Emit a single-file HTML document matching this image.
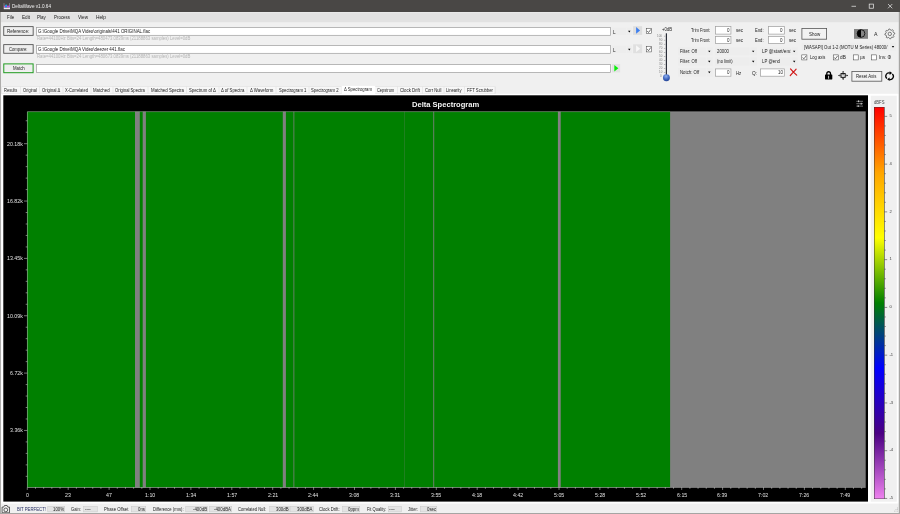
<!DOCTYPE html>
<html lang="en"><head><meta charset="utf-8"><title>DeltaWave v1.0.64</title><style>
html,body{margin:0;padding:0}
body{width:900px;height:514px;overflow:hidden;background:#f0f0f0;position:relative;font-family:"Liberation Sans",sans-serif}
.b{position:absolute;display:block;box-sizing:border-box}
.tx{position:absolute;left:0;top:0;width:900px;height:514px;filter:blur(0.36px)}
.g{position:static}
.t{position:absolute;display:block;white-space:nowrap;transform-origin:0 50%;font-family:"Liberation Sans",sans-serif}
</style></head>
<body>
<svg class="b" style="left:0;top:0" width="900" height="514" viewBox="0 0 900 514">
<g id="shape-titlebar">
<rect x="0.00" y="0.00" width="900.00" height="12.10" fill="#494745"/>
<g transform="translate(3.50 3.00)"><rect x="0.1" y="0.1" width="0.8" height="6" fill="#8d8b89"/><rect x="5.7" y="0.1" width="0.8" height="6" fill="#8d8b89"/><rect x="0.4" y="4.5" width="6.1" height="1.7" fill="#e9e9ee"/><rect x="0.4" y="2.7" width="6.1" height="1.5" fill="#e040c0"/><rect x="1.4" y="2.6" width="2.2" height="1.7" fill="#2a86f4"/><rect x="5.2" y="2.7" width="1.2" height="1.5" fill="#6a6af0"/><ellipse cx="2.6" cy="2.2" rx="1" ry="0.7" fill="#22a8e0"/></g>
<g transform="translate(848.00 2.00)"><path d="M3.5 4.3H8" stroke="#f0f0f0" stroke-width="0.7" fill="none"/><rect x="21.2" y="2.1" width="4.4" height="4.1" stroke="#f0f0f0" stroke-width="0.7" fill="none"/><path d="M40 2L44.3 6.3M44.3 2L40 6.3" stroke="#f0f0f0" stroke-width="0.7" fill="none"/></g>
</g>
<g id="shape-menubar">
<rect x="0.90" y="12.00" width="897.90" height="10.20" fill="#e2e2e2"/>
<rect x="0.90" y="12.00" width="897.90" height="1.20" fill="#e9e9e9"/>
</g>
<g id="shape-files">
<rect x="3.30" y="26.20" width="30.30" height="9.60" fill="#eeeeee"/>
<rect x="4.20" y="27.10" width="28.50" height="7.80" fill="none"/>
<rect x="4.45" y="27.35" width="28.00" height="7.30" fill="none" stroke="#f8f8f8" stroke-width="0.5"/>
<rect x="3.30" y="26.20" width="30.30" height="9.60" fill="none"/>
<rect x="3.75" y="26.65" width="29.40" height="8.70" fill="none" stroke="#505050" stroke-width="0.9"/>
<rect x="3.30" y="44.20" width="30.30" height="9.50" fill="#eeeeee"/>
<rect x="4.20" y="45.10" width="28.50" height="7.70" fill="none"/>
<rect x="4.45" y="45.35" width="28.00" height="7.20" fill="none" stroke="#f8f8f8" stroke-width="0.5"/>
<rect x="3.30" y="44.20" width="30.30" height="9.50" fill="none"/>
<rect x="3.75" y="44.65" width="29.40" height="8.60" fill="none" stroke="#505050" stroke-width="0.9"/>
<rect x="3.30" y="63.40" width="30.30" height="9.80" fill="#eeeeee"/>
<rect x="4.30" y="64.40" width="28.30" height="7.80" fill="none"/>
<rect x="4.55" y="64.65" width="27.80" height="7.30" fill="none" stroke="#f8f8f8" stroke-width="0.5"/>
<rect x="3.30" y="63.40" width="30.30" height="9.80" fill="none"/>
<rect x="3.80" y="63.90" width="29.30" height="8.80" fill="none" stroke="#1f9a1f" stroke-width="1.0"/>
<rect x="36.10" y="27.00" width="574.70" height="8.70" fill="#fff"/>
<rect x="36.48" y="27.38" width="573.95" height="7.95" fill="none" stroke="#a0a0a0" stroke-width="0.75"/>
<rect x="36.10" y="45.00" width="574.70" height="8.70" fill="#fff"/>
<rect x="36.48" y="45.38" width="573.95" height="7.95" fill="none" stroke="#a0a0a0" stroke-width="0.75"/>
<rect x="36.10" y="64.00" width="574.70" height="8.80" fill="#fff"/>
<rect x="36.48" y="64.38" width="573.95" height="8.05" fill="none" stroke="#a0a0a0" stroke-width="0.75"/>
<rect x="612.00" y="27.60" width="20.00" height="7.60" fill="#ededed"/>
<rect x="625.90" y="27.60" width="0.40" height="7.60" fill="#f5f5f5"/>
<g transform="translate(628.00 30.60)"><path d="M0.1 0.1H2.5L1.3 1.8Z" fill="#000"/></g>
<rect x="612.00" y="45.60" width="20.00" height="7.60" fill="#ededed"/>
<rect x="625.90" y="45.60" width="0.40" height="7.60" fill="#f5f5f5"/>
<g transform="translate(628.00 48.60)"><path d="M0.1 0.1H2.5L1.3 1.8Z" fill="#000"/></g>
<rect x="633.10" y="26.20" width="9.00" height="8.70" fill="#dedede"/>
<path d="M636.1 27.0L640.1 30.4L636.1 33.8Z" fill="#3d7ff0"/>
<rect x="633.10" y="44.30" width="9.00" height="8.90" fill="#e0e0e0"/>
<path d="M636.1 45.3L640.1 48.7L636.1 52.1Z" fill="#f8f8f8"/>
<rect x="612.00" y="64.00" width="8.10" height="8.40" fill="#e2e2e2"/>
<path d="M614.3 64.9L618.4 68.2L614.3 71.4Z" fill="#0aee0a"/>
<rect x="646.00" y="28.00" width="6.00" height="6.00" fill="#fff"/>
<rect x="646.27" y="28.27" width="5.45" height="5.45" fill="none" stroke="#444" stroke-width="0.55"/>
<g transform="translate(646.00 28.00)"><path d="M1.20 3.00L2.52 4.50L4.92 1.32" stroke="#333" stroke-width="0.7" fill="none"/></g>
<rect x="646.00" y="46.00" width="6.00" height="6.20" fill="#fff"/>
<rect x="646.27" y="46.27" width="5.45" height="5.65" fill="none" stroke="#444" stroke-width="0.55"/>
<g transform="translate(646.00 46.00)"><path d="M1.20 3.10L2.52 4.65L4.92 1.36" stroke="#333" stroke-width="0.7" fill="none"/></g>
</g>
<g id="shape-volume">
<rect x="665.80" y="33.30" width="1.20" height="42.70" fill="#2a2d38"/>
<rect x="663.90" y="35.85" width="1.50" height="0.50" fill="#858585"/>
<rect x="663.90" y="39.89" width="1.50" height="0.50" fill="#858585"/>
<rect x="663.90" y="43.93" width="1.50" height="0.50" fill="#858585"/>
<rect x="663.90" y="47.97" width="1.50" height="0.50" fill="#858585"/>
<rect x="663.90" y="52.01" width="1.50" height="0.50" fill="#858585"/>
<rect x="663.90" y="56.05" width="1.50" height="0.50" fill="#858585"/>
<rect x="663.90" y="60.09" width="1.50" height="0.50" fill="#858585"/>
<rect x="663.90" y="64.13" width="1.50" height="0.50" fill="#858585"/>
<rect x="663.90" y="68.17" width="1.50" height="0.50" fill="#858585"/>
<rect x="663.90" y="72.21" width="1.50" height="0.50" fill="#858585"/>
<rect x="663.90" y="76.25" width="1.50" height="0.50" fill="#858585"/>
<g transform="translate(662.40 73.70)"><defs><radialGradient id="kg" cx="0.45" cy="0.3" r="0.8"><stop offset="0" stop-color="#8fb0ee"/><stop offset="0.55" stop-color="#3f66c0"/><stop offset="1" stop-color="#1d3a86"/></radialGradient></defs><circle cx="4" cy="4" r="3.45" fill="url(#kg)"/></g>
</g>
<g id="shape-filters">
<rect x="715.00" y="26.00" width="16.30" height="8.50" fill="#fff"/>
<rect x="715.38" y="26.38" width="15.55" height="7.75" fill="none" stroke="#a0a0a0" stroke-width="0.75"/>
<rect x="715.00" y="36.00" width="16.30" height="7.80" fill="#fff"/>
<rect x="715.38" y="36.38" width="15.55" height="7.05" fill="none" stroke="#a0a0a0" stroke-width="0.75"/>
<rect x="768.00" y="26.00" width="16.70" height="8.50" fill="#fff"/>
<rect x="768.38" y="26.38" width="15.95" height="7.75" fill="none" stroke="#a0a0a0" stroke-width="0.75"/>
<rect x="768.00" y="36.00" width="16.70" height="7.80" fill="#fff"/>
<rect x="768.38" y="36.38" width="15.95" height="7.05" fill="none" stroke="#a0a0a0" stroke-width="0.75"/>
<rect x="678.00" y="47.30" width="34.70" height="8.10" fill="#ededed"/>
<rect x="705.90" y="47.30" width="0.40" height="8.10" fill="#f5f5f5"/>
<g transform="translate(708.00 50.55)"><path d="M0.1 0.1H2.5L1.3 1.8Z" fill="#000"/></g>
<rect x="678.00" y="57.40" width="34.70" height="8.20" fill="#ededed"/>
<rect x="705.90" y="57.40" width="0.40" height="8.20" fill="#f5f5f5"/>
<g transform="translate(708.00 60.70)"><path d="M0.1 0.1H2.5L1.3 1.8Z" fill="#000"/></g>
<rect x="678.00" y="68.00" width="34.70" height="8.60" fill="#ededed"/>
<rect x="705.90" y="68.00" width="0.40" height="8.60" fill="#f5f5f5"/>
<g transform="translate(708.00 71.50)"><path d="M0.1 0.1H2.5L1.3 1.8Z" fill="#000"/></g>
<rect x="715.00" y="47.30" width="42.00" height="8.10" fill="#ededed"/>
<rect x="749.80" y="47.30" width="0.40" height="8.10" fill="#f5f5f5"/>
<g transform="translate(751.90 50.55)"><path d="M0.1 0.1H2.5L1.3 1.8Z" fill="#000"/></g>
<rect x="715.00" y="57.40" width="42.00" height="8.20" fill="#ededed"/>
<rect x="749.80" y="57.40" width="0.40" height="8.20" fill="#f5f5f5"/>
<g transform="translate(751.90 60.70)"><path d="M0.1 0.1H2.5L1.3 1.8Z" fill="#000"/></g>
<rect x="760.00" y="47.30" width="37.60" height="8.10" fill="#ededed"/>
<rect x="790.80" y="47.30" width="0.40" height="8.10" fill="#f5f5f5"/>
<g transform="translate(792.90 50.55)"><path d="M0.1 0.1H2.5L1.3 1.8Z" fill="#000"/></g>
<rect x="760.00" y="57.40" width="37.60" height="8.20" fill="#ededed"/>
<rect x="790.80" y="57.40" width="0.40" height="8.20" fill="#f5f5f5"/>
<g transform="translate(792.90 60.70)"><path d="M0.1 0.1H2.5L1.3 1.8Z" fill="#000"/></g>
<rect x="715.00" y="68.50" width="16.30" height="8.10" fill="#fff"/>
<rect x="715.38" y="68.88" width="15.55" height="7.35" fill="none" stroke="#a0a0a0" stroke-width="0.75"/>
<rect x="760.00" y="68.50" width="24.70" height="8.10" fill="#fff"/>
<rect x="760.38" y="68.88" width="23.95" height="7.35" fill="none" stroke="#a0a0a0" stroke-width="0.75"/>
<g transform="translate(789.50 68.30)"><path d="M1 0.6C2.5 2.4 5 5 7.2 6.8M6.6 0.8C5 2.6 2.6 5.2 0.8 7.2" stroke="#d01818" stroke-width="1.2" fill="none" stroke-linecap="round"/></g>
</g>
<g id="shape-options">
<rect x="801.50" y="28.00" width="25.50" height="11.60" fill="#f2f2f2"/>
<rect x="801.90" y="28.40" width="24.70" height="10.80" fill="none" stroke="#555" stroke-width="0.8"/>
<rect x="854.00" y="29.00" width="14.00" height="9.80" fill="#808080"/>
<g transform="translate(856.00 28.50)"><circle cx="5" cy="5" r="3.85" fill="#858585" stroke="#000" stroke-width="0.75"/><path d="M5 1.15A3.85 3.85 0 0 0 5 8.85Z" fill="#000"/></g>
<g transform="translate(883.80 27.90)"><path d="M10.85 5.03L10.95 6.00L9.78 6.75L9.56 7.47L10.12 8.75L9.50 9.50L8.14 9.20L7.47 9.56L6.97 10.85L6.00 10.95L5.25 9.78L4.53 9.56L3.25 10.12L2.50 9.50L2.80 8.14L2.44 7.47L1.15 6.97L1.05 6.00L2.22 5.25L2.44 4.53L1.88 3.25L2.50 2.50L3.86 2.80L4.53 2.44L5.03 1.15L6.00 1.05L6.75 2.22L7.47 2.44L8.75 1.88L9.50 2.50L9.20 3.86L9.56 4.53Z" fill="none" stroke="#4a4a4a" stroke-width="0.7" stroke-linejoin="round"/><circle cx="6" cy="6" r="1.7" fill="none" stroke="#4a4a4a" stroke-width="0.7"/></g>
<rect x="801.50" y="42.70" width="94.50" height="7.90" fill="#ededed"/>
<rect x="889.60" y="42.70" width="0.40" height="7.90" fill="#f5f5f5"/>
<g transform="translate(891.70 45.85)"><path d="M0.1 0.1H2.5L1.3 1.8Z" fill="#000"/></g>
<rect x="801.50" y="54.60" width="5.70" height="5.60" fill="#fff"/>
<rect x="801.77" y="54.88" width="5.15" height="5.05" fill="none" stroke="#444" stroke-width="0.55"/>
<g transform="translate(801.50 54.60)"><path d="M1.14 2.80L2.39 4.20L4.67 1.23" stroke="#333" stroke-width="0.7" fill="none"/></g>
<rect x="833.00" y="54.60" width="5.70" height="5.60" fill="#fff"/>
<rect x="833.27" y="54.88" width="5.15" height="5.05" fill="none" stroke="#444" stroke-width="0.55"/>
<g transform="translate(833.00 54.60)"><path d="M1.14 2.80L2.39 4.20L4.67 1.23" stroke="#333" stroke-width="0.7" fill="none"/></g>
<rect x="853.00" y="54.60" width="5.50" height="5.60" fill="#fff"/>
<rect x="853.27" y="54.88" width="4.95" height="5.05" fill="none" stroke="#444" stroke-width="0.55"/>
<rect x="871.20" y="54.60" width="5.60" height="5.60" fill="#fff"/>
<rect x="871.48" y="54.88" width="5.05" height="5.05" fill="none" stroke="#444" stroke-width="0.55"/>
<g transform="translate(824.50 70.50)"><path d="M2.3 4.4V3.1A1.85 1.85 0 0 1 6 3.1V4.4" fill="none" stroke="#000" stroke-width="1.3"/><rect x="0.5" y="4" width="7.3" height="5" rx="0.4" fill="#000"/><rect x="3.75" y="5.3" width="0.8" height="2.9" fill="#f0f0f0"/></g>
<g transform="translate(837.60 70.20)"><rect x="3.4" y="3.4" width="4.2" height="3.7" fill="#f4f4f4" stroke="#000" stroke-width="0.95"/><path d="M5.5 0.7L6.6 2.1H4.4ZM5.5 9.8L6.6 8.4H4.4ZM0.5 5.25L1.9 4.2V6.3ZM10.5 5.25L9.1 4.2V6.3Z" fill="#000"/><path d="M5.5 2V3.2M5.5 7.3V8.5M1.8 5.25H3M8 5.25H9.2M4.7 4.6H6.3" stroke="#000" stroke-width="0.6"/></g>
<rect x="851.50" y="71.00" width="30.70" height="10.60" fill="#f2f2f2"/>
<rect x="851.90" y="71.40" width="29.90" height="9.80" fill="none" stroke="#555" stroke-width="0.8"/>
<g transform="translate(884.60 71.20)"><path d="M2.3 7.2A3.1 3.1 0 0 1 5.3 1.9" fill="none" stroke="#000" stroke-width="1.25"/><path d="M5 0.1L7.5 1.9L5 3.7Z" fill="#000"/><path d="M7.7 2.8A3.1 3.1 0 0 1 4.7 8.1" fill="none" stroke="#000" stroke-width="1.25"/><path d="M5 9.9L2.5 8.1L5 6.3Z" fill="#000"/></g>
</g>
<g id="shape-tabs">
<rect x="1.50" y="86.50" width="493.70" height="7.50" fill="#f7f7f7"/>
<rect x="1.75" y="86.75" width="493.20" height="7.00" fill="none" stroke="#dcdcdc" stroke-width="0.5"/>
<rect x="1.20" y="93.80" width="897.40" height="409.70" fill="#fff"/>
<rect x="20.25" y="86.50" width="0.50" height="7.20" fill="#dcdcdc"/>
<rect x="39.35" y="86.50" width="0.50" height="7.20" fill="#dcdcdc"/>
<rect x="62.75" y="86.50" width="0.50" height="7.20" fill="#dcdcdc"/>
<rect x="90.75" y="86.50" width="0.50" height="7.20" fill="#dcdcdc"/>
<rect x="112.75" y="86.50" width="0.50" height="7.20" fill="#dcdcdc"/>
<rect x="147.75" y="86.50" width="0.50" height="7.20" fill="#dcdcdc"/>
<rect x="186.35" y="86.50" width="0.50" height="7.20" fill="#dcdcdc"/>
<rect x="218.75" y="86.50" width="0.50" height="7.20" fill="#dcdcdc"/>
<rect x="246.75" y="86.50" width="0.50" height="7.20" fill="#dcdcdc"/>
<rect x="275.75" y="86.50" width="0.50" height="7.20" fill="#dcdcdc"/>
<rect x="308.75" y="86.50" width="0.50" height="7.20" fill="#dcdcdc"/>
<rect x="341.35" y="86.50" width="0.50" height="7.20" fill="#dcdcdc"/>
<rect x="341.60" y="85.50" width="33.60" height="9.00" fill="#fff"/>
<rect x="341.60" y="85.50" width="33.60" height="0.40" fill="#e6e6e6"/>
<rect x="397.35" y="86.50" width="0.50" height="7.20" fill="#dcdcdc"/>
<rect x="422.35" y="86.50" width="0.50" height="7.20" fill="#dcdcdc"/>
<rect x="443.75" y="86.50" width="0.50" height="7.20" fill="#dcdcdc"/>
<rect x="464.15" y="86.50" width="0.50" height="7.20" fill="#dcdcdc"/>
<rect x="494.95" y="86.50" width="0.50" height="7.20" fill="#dcdcdc"/>
</g>
<g id="shape-plot">
<rect x="3.30" y="95.30" width="864.70" height="406.30" fill="#000"/>
<rect x="27.30" y="111.70" width="838.40" height="375.60" fill="#808080"/>
<rect x="27.30" y="111.70" width="642.80" height="375.60" fill="#008000"/>
<rect x="135.00" y="111.70" width="4.80" height="375.60" fill="#808080"/>
<rect x="142.70" y="111.70" width="3.20" height="375.60" fill="#808080"/>
<rect x="282.80" y="111.70" width="3.10" height="375.60" fill="#808080"/>
<rect x="293.10" y="111.70" width="1.40" height="375.60" fill="rgba(128,128,128,0.55)"/>
<rect x="404.20" y="111.70" width="0.70" height="375.60" fill="rgba(128,128,128,0.35)"/>
<rect x="433.20" y="111.70" width="1.00" height="375.60" fill="rgba(128,128,128,0.85)"/>
<rect x="557.90" y="111.70" width="2.80" height="375.60" fill="#838082"/>
<rect x="27.30" y="111.40" width="838.40" height="0.70" fill="rgba(200,200,200,0.45)"/>
<rect x="27.30" y="487.00" width="838.40" height="0.70" fill="rgba(220,220,220,0.6)"/>
<rect x="26.95" y="111.70" width="0.70" height="375.60" fill="rgba(200,220,200,0.6)"/>
<g transform="translate(856.00 100.00)"><path d="M0.3 1.3H7M0.3 3.7H7M0.3 6.1H7" stroke="#e0e0e0" stroke-width="0.5"/><path d="M2.6 0.4V2.2M5.2 2.8V4.6M2.2 5.2V7" stroke="#e8e8e8" stroke-width="0.9"/></g>
<path d="M27.30 487.30v2.6" stroke="#d8d8d8" stroke-width="0.55"/><path d="M35.48 487.30v1.5" stroke="#d8d8d8" stroke-width="0.55"/><path d="M43.66 487.30v1.5" stroke="#d8d8d8" stroke-width="0.55"/><path d="M51.84 487.30v1.5" stroke="#d8d8d8" stroke-width="0.55"/><path d="M60.02 487.30v1.5" stroke="#d8d8d8" stroke-width="0.55"/><path d="M68.20 487.30v2.6" stroke="#d8d8d8" stroke-width="0.55"/><path d="M76.38 487.30v1.5" stroke="#d8d8d8" stroke-width="0.55"/><path d="M84.56 487.30v1.5" stroke="#d8d8d8" stroke-width="0.55"/><path d="M92.74 487.30v1.5" stroke="#d8d8d8" stroke-width="0.55"/><path d="M100.92 487.30v1.5" stroke="#d8d8d8" stroke-width="0.55"/><path d="M109.10 487.30v2.6" stroke="#d8d8d8" stroke-width="0.55"/><path d="M117.28 487.30v1.5" stroke="#d8d8d8" stroke-width="0.55"/><path d="M125.46 487.30v1.5" stroke="#d8d8d8" stroke-width="0.55"/><path d="M133.64 487.30v1.5" stroke="#d8d8d8" stroke-width="0.55"/><path d="M141.82 487.30v1.5" stroke="#d8d8d8" stroke-width="0.55"/><path d="M150.00 487.30v2.6" stroke="#d8d8d8" stroke-width="0.55"/><path d="M158.18 487.30v1.5" stroke="#d8d8d8" stroke-width="0.55"/><path d="M166.36 487.30v1.5" stroke="#d8d8d8" stroke-width="0.55"/><path d="M174.54 487.30v1.5" stroke="#d8d8d8" stroke-width="0.55"/><path d="M182.72 487.30v1.5" stroke="#d8d8d8" stroke-width="0.55"/><path d="M190.90 487.30v2.6" stroke="#d8d8d8" stroke-width="0.55"/><path d="M199.08 487.30v1.5" stroke="#d8d8d8" stroke-width="0.55"/><path d="M207.26 487.30v1.5" stroke="#d8d8d8" stroke-width="0.55"/><path d="M215.44 487.30v1.5" stroke="#d8d8d8" stroke-width="0.55"/><path d="M223.62 487.30v1.5" stroke="#d8d8d8" stroke-width="0.55"/><path d="M231.80 487.30v2.6" stroke="#d8d8d8" stroke-width="0.55"/><path d="M239.98 487.30v1.5" stroke="#d8d8d8" stroke-width="0.55"/><path d="M248.16 487.30v1.5" stroke="#d8d8d8" stroke-width="0.55"/><path d="M256.34 487.30v1.5" stroke="#d8d8d8" stroke-width="0.55"/><path d="M264.52 487.30v1.5" stroke="#d8d8d8" stroke-width="0.55"/><path d="M272.70 487.30v2.6" stroke="#d8d8d8" stroke-width="0.55"/><path d="M280.88 487.30v1.5" stroke="#d8d8d8" stroke-width="0.55"/><path d="M289.06 487.30v1.5" stroke="#d8d8d8" stroke-width="0.55"/><path d="M297.24 487.30v1.5" stroke="#d8d8d8" stroke-width="0.55"/><path d="M305.42 487.30v1.5" stroke="#d8d8d8" stroke-width="0.55"/><path d="M313.60 487.30v2.6" stroke="#d8d8d8" stroke-width="0.55"/><path d="M321.78 487.30v1.5" stroke="#d8d8d8" stroke-width="0.55"/><path d="M329.96 487.30v1.5" stroke="#d8d8d8" stroke-width="0.55"/><path d="M338.14 487.30v1.5" stroke="#d8d8d8" stroke-width="0.55"/><path d="M346.32 487.30v1.5" stroke="#d8d8d8" stroke-width="0.55"/><path d="M354.50 487.30v2.6" stroke="#d8d8d8" stroke-width="0.55"/><path d="M362.68 487.30v1.5" stroke="#d8d8d8" stroke-width="0.55"/><path d="M370.86 487.30v1.5" stroke="#d8d8d8" stroke-width="0.55"/><path d="M379.04 487.30v1.5" stroke="#d8d8d8" stroke-width="0.55"/><path d="M387.22 487.30v1.5" stroke="#d8d8d8" stroke-width="0.55"/><path d="M395.40 487.30v2.6" stroke="#d8d8d8" stroke-width="0.55"/><path d="M403.58 487.30v1.5" stroke="#d8d8d8" stroke-width="0.55"/><path d="M411.76 487.30v1.5" stroke="#d8d8d8" stroke-width="0.55"/><path d="M419.94 487.30v1.5" stroke="#d8d8d8" stroke-width="0.55"/><path d="M428.12 487.30v1.5" stroke="#d8d8d8" stroke-width="0.55"/><path d="M436.30 487.30v2.6" stroke="#d8d8d8" stroke-width="0.55"/><path d="M444.48 487.30v1.5" stroke="#d8d8d8" stroke-width="0.55"/><path d="M452.66 487.30v1.5" stroke="#d8d8d8" stroke-width="0.55"/><path d="M460.84 487.30v1.5" stroke="#d8d8d8" stroke-width="0.55"/><path d="M469.02 487.30v1.5" stroke="#d8d8d8" stroke-width="0.55"/><path d="M477.20 487.30v2.6" stroke="#d8d8d8" stroke-width="0.55"/><path d="M485.38 487.30v1.5" stroke="#d8d8d8" stroke-width="0.55"/><path d="M493.56 487.30v1.5" stroke="#d8d8d8" stroke-width="0.55"/><path d="M501.74 487.30v1.5" stroke="#d8d8d8" stroke-width="0.55"/><path d="M509.92 487.30v1.5" stroke="#d8d8d8" stroke-width="0.55"/><path d="M518.10 487.30v2.6" stroke="#d8d8d8" stroke-width="0.55"/><path d="M526.28 487.30v1.5" stroke="#d8d8d8" stroke-width="0.55"/><path d="M534.46 487.30v1.5" stroke="#d8d8d8" stroke-width="0.55"/><path d="M542.64 487.30v1.5" stroke="#d8d8d8" stroke-width="0.55"/><path d="M550.82 487.30v1.5" stroke="#d8d8d8" stroke-width="0.55"/><path d="M559.00 487.30v2.6" stroke="#d8d8d8" stroke-width="0.55"/><path d="M567.18 487.30v1.5" stroke="#d8d8d8" stroke-width="0.55"/><path d="M575.36 487.30v1.5" stroke="#d8d8d8" stroke-width="0.55"/><path d="M583.54 487.30v1.5" stroke="#d8d8d8" stroke-width="0.55"/><path d="M591.72 487.30v1.5" stroke="#d8d8d8" stroke-width="0.55"/><path d="M599.90 487.30v2.6" stroke="#d8d8d8" stroke-width="0.55"/><path d="M608.08 487.30v1.5" stroke="#d8d8d8" stroke-width="0.55"/><path d="M616.26 487.30v1.5" stroke="#d8d8d8" stroke-width="0.55"/><path d="M624.44 487.30v1.5" stroke="#d8d8d8" stroke-width="0.55"/><path d="M632.62 487.30v1.5" stroke="#d8d8d8" stroke-width="0.55"/><path d="M640.80 487.30v2.6" stroke="#d8d8d8" stroke-width="0.55"/><path d="M648.98 487.30v1.5" stroke="#d8d8d8" stroke-width="0.55"/><path d="M657.16 487.30v1.5" stroke="#d8d8d8" stroke-width="0.55"/><path d="M665.34 487.30v1.5" stroke="#d8d8d8" stroke-width="0.55"/><path d="M673.52 487.30v1.5" stroke="#d8d8d8" stroke-width="0.55"/><path d="M681.70 487.30v2.6" stroke="#d8d8d8" stroke-width="0.55"/><path d="M689.88 487.30v1.5" stroke="#d8d8d8" stroke-width="0.55"/><path d="M698.06 487.30v1.5" stroke="#d8d8d8" stroke-width="0.55"/><path d="M706.24 487.30v1.5" stroke="#d8d8d8" stroke-width="0.55"/><path d="M714.42 487.30v1.5" stroke="#d8d8d8" stroke-width="0.55"/><path d="M722.60 487.30v2.6" stroke="#d8d8d8" stroke-width="0.55"/><path d="M730.78 487.30v1.5" stroke="#d8d8d8" stroke-width="0.55"/><path d="M738.96 487.30v1.5" stroke="#d8d8d8" stroke-width="0.55"/><path d="M747.14 487.30v1.5" stroke="#d8d8d8" stroke-width="0.55"/><path d="M755.32 487.30v1.5" stroke="#d8d8d8" stroke-width="0.55"/><path d="M763.50 487.30v2.6" stroke="#d8d8d8" stroke-width="0.55"/><path d="M771.68 487.30v1.5" stroke="#d8d8d8" stroke-width="0.55"/><path d="M779.86 487.30v1.5" stroke="#d8d8d8" stroke-width="0.55"/><path d="M788.04 487.30v1.5" stroke="#d8d8d8" stroke-width="0.55"/><path d="M796.22 487.30v1.5" stroke="#d8d8d8" stroke-width="0.55"/><path d="M804.40 487.30v2.6" stroke="#d8d8d8" stroke-width="0.55"/><path d="M812.58 487.30v1.5" stroke="#d8d8d8" stroke-width="0.55"/><path d="M820.76 487.30v1.5" stroke="#d8d8d8" stroke-width="0.55"/><path d="M828.94 487.30v1.5" stroke="#d8d8d8" stroke-width="0.55"/><path d="M837.12 487.30v1.5" stroke="#d8d8d8" stroke-width="0.55"/><path d="M845.30 487.30v2.6" stroke="#d8d8d8" stroke-width="0.55"/><path d="M853.48 487.30v1.5" stroke="#d8d8d8" stroke-width="0.55"/><path d="M861.66 487.30v1.5" stroke="#d8d8d8" stroke-width="0.55"/><path d="M27.30 120.76h-1.6" stroke="#d8d8d8" stroke-width="0.55"/><path d="M27.30 132.23h-1.6" stroke="#d8d8d8" stroke-width="0.55"/><path d="M27.30 143.70h-3.3" stroke="#d8d8d8" stroke-width="0.55"/><path d="M27.30 155.17h-1.6" stroke="#d8d8d8" stroke-width="0.55"/><path d="M27.30 166.64h-1.6" stroke="#d8d8d8" stroke-width="0.55"/><path d="M27.30 178.11h-1.6" stroke="#d8d8d8" stroke-width="0.55"/><path d="M27.30 189.58h-1.6" stroke="#d8d8d8" stroke-width="0.55"/><path d="M27.30 201.05h-3.3" stroke="#d8d8d8" stroke-width="0.55"/><path d="M27.30 212.52h-1.6" stroke="#d8d8d8" stroke-width="0.55"/><path d="M27.30 223.99h-1.6" stroke="#d8d8d8" stroke-width="0.55"/><path d="M27.30 235.46h-1.6" stroke="#d8d8d8" stroke-width="0.55"/><path d="M27.30 246.93h-1.6" stroke="#d8d8d8" stroke-width="0.55"/><path d="M27.30 258.40h-3.3" stroke="#d8d8d8" stroke-width="0.55"/><path d="M27.30 269.87h-1.6" stroke="#d8d8d8" stroke-width="0.55"/><path d="M27.30 281.34h-1.6" stroke="#d8d8d8" stroke-width="0.55"/><path d="M27.30 292.81h-1.6" stroke="#d8d8d8" stroke-width="0.55"/><path d="M27.30 304.28h-1.6" stroke="#d8d8d8" stroke-width="0.55"/><path d="M27.30 315.75h-3.3" stroke="#d8d8d8" stroke-width="0.55"/><path d="M27.30 327.22h-1.6" stroke="#d8d8d8" stroke-width="0.55"/><path d="M27.30 338.69h-1.6" stroke="#d8d8d8" stroke-width="0.55"/><path d="M27.30 350.16h-1.6" stroke="#d8d8d8" stroke-width="0.55"/><path d="M27.30 361.63h-1.6" stroke="#d8d8d8" stroke-width="0.55"/><path d="M27.30 373.10h-3.3" stroke="#d8d8d8" stroke-width="0.55"/><path d="M27.30 384.57h-1.6" stroke="#d8d8d8" stroke-width="0.55"/><path d="M27.30 396.04h-1.6" stroke="#d8d8d8" stroke-width="0.55"/><path d="M27.30 407.51h-1.6" stroke="#d8d8d8" stroke-width="0.55"/><path d="M27.30 418.98h-1.6" stroke="#d8d8d8" stroke-width="0.55"/><path d="M27.30 430.45h-3.3" stroke="#d8d8d8" stroke-width="0.55"/><path d="M27.30 441.92h-1.6" stroke="#d8d8d8" stroke-width="0.55"/><path d="M27.30 453.39h-1.6" stroke="#d8d8d8" stroke-width="0.55"/><path d="M27.30 464.86h-1.6" stroke="#d8d8d8" stroke-width="0.55"/><path d="M27.30 476.33h-1.6" stroke="#d8d8d8" stroke-width="0.55"/>
</g>
<g id="shape-colorbar">
<rect x="870.70" y="95.70" width="26.10" height="406.00" fill="#f0f0f0"/>
<rect x="874.00" y="107.00" width="10.60" height="392.00" fill="#333"/>
<defs><linearGradient id="cb" x1="0" y1="0" x2="0" y2="1"><stop offset="0" stop-color="#ff0000"/><stop offset="0.16667" stop-color="#ffa500"/><stop offset="0.33333" stop-color="#ffff00"/><stop offset="0.5" stop-color="#008000"/><stop offset="0.66667" stop-color="#0000ff"/><stop offset="0.83333" stop-color="#4b0082"/><stop offset="1" stop-color="#ee82ee"/></linearGradient></defs>
<rect x="874.50" y="107.40" width="9.60" height="391.20" fill="url(#cb)"/>
<path d="M884.4 498.45h2.8" stroke="#3a3a3a" stroke-width="0.55"/><path d="M884.4 488.90h1.4" stroke="#3a3a3a" stroke-width="0.55"/><path d="M884.4 479.35h1.4" stroke="#3a3a3a" stroke-width="0.55"/><path d="M884.4 469.79h1.4" stroke="#3a3a3a" stroke-width="0.55"/><path d="M884.4 460.24h1.4" stroke="#3a3a3a" stroke-width="0.55"/><path d="M884.4 450.69h2.8" stroke="#3a3a3a" stroke-width="0.55"/><path d="M884.4 441.14h1.4" stroke="#3a3a3a" stroke-width="0.55"/><path d="M884.4 431.59h1.4" stroke="#3a3a3a" stroke-width="0.55"/><path d="M884.4 422.03h1.4" stroke="#3a3a3a" stroke-width="0.55"/><path d="M884.4 412.48h1.4" stroke="#3a3a3a" stroke-width="0.55"/><path d="M884.4 402.93h2.8" stroke="#3a3a3a" stroke-width="0.55"/><path d="M884.4 393.38h1.4" stroke="#3a3a3a" stroke-width="0.55"/><path d="M884.4 383.83h1.4" stroke="#3a3a3a" stroke-width="0.55"/><path d="M884.4 374.27h1.4" stroke="#3a3a3a" stroke-width="0.55"/><path d="M884.4 364.72h1.4" stroke="#3a3a3a" stroke-width="0.55"/><path d="M884.4 355.17h2.8" stroke="#3a3a3a" stroke-width="0.55"/><path d="M884.4 345.62h1.4" stroke="#3a3a3a" stroke-width="0.55"/><path d="M884.4 336.07h1.4" stroke="#3a3a3a" stroke-width="0.55"/><path d="M884.4 326.51h1.4" stroke="#3a3a3a" stroke-width="0.55"/><path d="M884.4 316.96h1.4" stroke="#3a3a3a" stroke-width="0.55"/><path d="M884.4 307.41h2.8" stroke="#3a3a3a" stroke-width="0.55"/><path d="M884.4 297.86h1.4" stroke="#3a3a3a" stroke-width="0.55"/><path d="M884.4 288.31h1.4" stroke="#3a3a3a" stroke-width="0.55"/><path d="M884.4 278.75h1.4" stroke="#3a3a3a" stroke-width="0.55"/><path d="M884.4 269.20h1.4" stroke="#3a3a3a" stroke-width="0.55"/><path d="M884.4 259.65h2.8" stroke="#3a3a3a" stroke-width="0.55"/><path d="M884.4 250.10h1.4" stroke="#3a3a3a" stroke-width="0.55"/><path d="M884.4 240.55h1.4" stroke="#3a3a3a" stroke-width="0.55"/><path d="M884.4 230.99h1.4" stroke="#3a3a3a" stroke-width="0.55"/><path d="M884.4 221.44h1.4" stroke="#3a3a3a" stroke-width="0.55"/><path d="M884.4 211.89h2.8" stroke="#3a3a3a" stroke-width="0.55"/><path d="M884.4 202.34h1.4" stroke="#3a3a3a" stroke-width="0.55"/><path d="M884.4 192.79h1.4" stroke="#3a3a3a" stroke-width="0.55"/><path d="M884.4 183.23h1.4" stroke="#3a3a3a" stroke-width="0.55"/><path d="M884.4 173.68h1.4" stroke="#3a3a3a" stroke-width="0.55"/><path d="M884.4 164.13h2.8" stroke="#3a3a3a" stroke-width="0.55"/><path d="M884.4 154.58h1.4" stroke="#3a3a3a" stroke-width="0.55"/><path d="M884.4 145.03h1.4" stroke="#3a3a3a" stroke-width="0.55"/><path d="M884.4 135.47h1.4" stroke="#3a3a3a" stroke-width="0.55"/><path d="M884.4 125.92h1.4" stroke="#3a3a3a" stroke-width="0.55"/><path d="M884.4 116.37h2.8" stroke="#3a3a3a" stroke-width="0.55"/>
</g>
<g id="shape-statusbar">
<g transform="translate(1.20 504.20)"><path d="M0.9 2.9H2.5L3.3 1.3H5.9L6.7 2.9H8.3V8.6H0.9Z" fill="none" stroke="#333" stroke-width="0.75" stroke-linejoin="round"/><circle cx="4.6" cy="5.7" r="1.9" fill="none" stroke="#333" stroke-width="0.75"/></g>
<rect x="47.60" y="506.20" width="17.40" height="5.90" fill="#e4e4e4"/>
<rect x="47.80" y="506.40" width="17.00" height="5.50" fill="none" stroke="#c4c4c4" stroke-width="0.4"/>
<rect x="83.40" y="506.20" width="14.20" height="5.90" fill="#e4e4e4"/>
<rect x="83.60" y="506.40" width="13.80" height="5.50" fill="none" stroke="#c4c4c4" stroke-width="0.4"/>
<rect x="131.00" y="506.20" width="15.00" height="5.90" fill="#e4e4e4"/>
<rect x="131.20" y="506.40" width="14.60" height="5.50" fill="none" stroke="#c4c4c4" stroke-width="0.4"/>
<rect x="185.60" y="506.20" width="22.00" height="5.90" fill="#e4e4e4"/>
<rect x="185.80" y="506.40" width="21.60" height="5.50" fill="none" stroke="#c4c4c4" stroke-width="0.4"/>
<rect x="209.40" y="506.20" width="22.60" height="5.90" fill="#e4e4e4"/>
<rect x="209.60" y="506.40" width="22.20" height="5.50" fill="none" stroke="#c4c4c4" stroke-width="0.4"/>
<rect x="269.60" y="506.20" width="20.00" height="5.90" fill="#e4e4e4"/>
<rect x="269.80" y="506.40" width="19.60" height="5.50" fill="none" stroke="#c4c4c4" stroke-width="0.4"/>
<rect x="290.60" y="506.20" width="23.00" height="5.90" fill="#e4e4e4"/>
<rect x="290.80" y="506.40" width="22.60" height="5.50" fill="none" stroke="#c4c4c4" stroke-width="0.4"/>
<rect x="342.40" y="506.20" width="17.60" height="5.90" fill="#e4e4e4"/>
<rect x="342.60" y="506.40" width="17.20" height="5.50" fill="none" stroke="#c4c4c4" stroke-width="0.4"/>
<rect x="388.00" y="506.20" width="13.60" height="5.90" fill="#e4e4e4"/>
<rect x="388.20" y="506.40" width="13.20" height="5.50" fill="none" stroke="#c4c4c4" stroke-width="0.4"/>
<rect x="420.00" y="506.20" width="17.00" height="5.90" fill="#e4e4e4"/>
<rect x="420.20" y="506.40" width="16.60" height="5.50" fill="none" stroke="#c4c4c4" stroke-width="0.4"/>
<g transform="translate(890.00 504.00)"><path d="M7.2 3.6h0.8v0.8h-0.8zM5.6 5.2h0.8v0.8h-0.8zM7.2 5.2h0.8v0.8h-0.8zM4 6.8h0.8v0.8h-0.8zM5.6 6.8h0.8v0.8h-0.8zM7.2 6.8h0.8v0.8h-0.8z" fill="#b0b0b0"/></g>
</g>
<g id="shape-frame">
<rect x="0.00" y="12.00" width="0.90" height="502.00" fill="#a6a5a3"/>
<rect x="898.80" y="12.00" width="1.20" height="502.00" fill="#a6a5a3"/>
<rect x="0.00" y="513.00" width="900.00" height="1.00" fill="#a6a5a3"/>
</g>
</svg>
<div class="tx">
<div class="g" id="titlebar" aria-label="titlebar">
<span class="t" style="left:12.00px;top:3.04px;font-size:5.6px;line-height:6.72px;color:#f2f2f2;transform:scaleX(0.8279);">DeltaWave v1.0.64</span>
</div>
<div class="g" id="menubar" aria-label="menubar">
<span class="t" style="left:6.50px;top:13.94px;font-size:5.6px;line-height:6.72px;color:#222;transform:scaleX(0.7868);">File</span>
<span class="t" style="left:21.60px;top:13.94px;font-size:5.6px;line-height:6.72px;color:#222;transform:scaleX(0.8290);">Edit</span>
<span class="t" style="left:37.20px;top:13.94px;font-size:5.6px;line-height:6.72px;color:#222;transform:scaleX(0.8078);">Play</span>
<span class="t" style="left:54.00px;top:13.94px;font-size:5.6px;line-height:6.72px;color:#222;transform:scaleX(0.7909);">Process</span>
<span class="t" style="left:78.00px;top:13.94px;font-size:5.6px;line-height:6.72px;color:#222;transform:scaleX(0.8308);">View</span>
<span class="t" style="left:96.00px;top:13.94px;font-size:5.6px;line-height:6.72px;color:#222;transform:scaleX(0.8683);">Help</span>
</div>
<div class="g" id="files" aria-label="files">
<span class="t" style="left:7.00px;top:27.86px;font-size:5.4px;line-height:6.48px;color:#222;transform:scaleX(0.8404);">Reference:</span>
<span class="t" style="left:8.70px;top:45.81px;font-size:5.4px;line-height:6.48px;color:#222;transform:scaleX(0.7761);">Compare:</span>
<span class="t" style="left:12.60px;top:65.16px;font-size:5.4px;line-height:6.48px;color:#222;transform:scaleX(0.8024);">Match</span>
<span class="t" style="left:37.60px;top:27.51px;font-size:5.4px;line-height:6.48px;color:#222;transform:scaleX(0.8219);">G:\Google Drive\MQA Video\originals\441 ORIGINAL.flac</span>
<span class="t" style="left:37.60px;top:45.51px;font-size:5.4px;line-height:6.48px;color:#222;transform:scaleX(0.8219);">G:\Google Drive\MQA Video\deezer 441.flac</span>
<span class="t" style="left:37.00px;top:34.96px;font-size:5.4px;line-height:6.48px;color:#b4b4b4;transform:scaleX(0.7949);">Rate=44100Hz Bits=24 Length=480473.0839ms (21188863 samples) Level=0dB</span>
<span class="t" style="left:37.00px;top:53.16px;font-size:5.4px;line-height:6.48px;color:#b4b4b4;transform:scaleX(0.7949);">Rate=44100Hz Bits=24 Length=480673.0839ms (21188863 samples) Level=0dB</span>
<span class="t" style="left:613.30px;top:28.76px;font-size:5.4px;line-height:6.48px;color:#222;transform:scaleX(0.8657);">L</span>
<span class="t" style="left:613.30px;top:46.76px;font-size:5.4px;line-height:6.48px;color:#222;transform:scaleX(0.8657);">L</span>
</div>
<div class="g" id="volume" aria-label="volume">
<span class="t" style="left:661.60px;top:26.48px;font-size:5.2px;line-height:6.24px;color:#222;transform:scaleX(0.8137);">+0dB</span>
<span class="t" style="left:657.01px;top:34.06px;font-size:3.4px;line-height:4.08px;color:#808080;transform:scaleX(0.8800);">100</span>
<span class="t" style="left:658.67px;top:38.10px;font-size:3.4px;line-height:4.08px;color:#808080;transform:scaleX(0.8800);">90</span>
<span class="t" style="left:658.67px;top:42.14px;font-size:3.4px;line-height:4.08px;color:#808080;transform:scaleX(0.8800);">80</span>
<span class="t" style="left:658.67px;top:46.18px;font-size:3.4px;line-height:4.08px;color:#808080;transform:scaleX(0.8800);">70</span>
<span class="t" style="left:658.67px;top:50.22px;font-size:3.4px;line-height:4.08px;color:#808080;transform:scaleX(0.8800);">60</span>
<span class="t" style="left:658.67px;top:54.26px;font-size:3.4px;line-height:4.08px;color:#808080;transform:scaleX(0.8800);">50</span>
<span class="t" style="left:658.67px;top:58.30px;font-size:3.4px;line-height:4.08px;color:#808080;transform:scaleX(0.8800);">40</span>
<span class="t" style="left:658.67px;top:62.34px;font-size:3.4px;line-height:4.08px;color:#808080;transform:scaleX(0.8800);">30</span>
<span class="t" style="left:658.67px;top:66.38px;font-size:3.4px;line-height:4.08px;color:#808080;transform:scaleX(0.8800);">20</span>
<span class="t" style="left:658.67px;top:70.42px;font-size:3.4px;line-height:4.08px;color:#808080;transform:scaleX(0.8800);">10</span>
<span class="t" style="left:660.34px;top:74.46px;font-size:3.4px;line-height:4.08px;color:#808080;transform:scaleX(0.8800);">0</span>
</div>
<div class="g" id="filters" aria-label="filters">
<span class="t" style="left:691.30px;top:26.76px;font-size:5.4px;line-height:6.48px;color:#222;transform:scaleX(0.7443);">Trim Front:</span>
<span class="t" style="left:691.30px;top:36.56px;font-size:5.4px;line-height:6.48px;color:#222;transform:scaleX(0.7443);">Trim Front:</span>
<span class="t" style="left:726.91px;top:27.06px;font-size:5.4px;line-height:6.48px;color:#222;transform:scaleX(0.8300);">0</span>
<span class="t" style="left:726.91px;top:36.76px;font-size:5.4px;line-height:6.48px;color:#222;transform:scaleX(0.8300);">0</span>
<span class="t" style="left:736.00px;top:26.96px;font-size:5.4px;line-height:6.48px;color:#222;transform:scaleX(0.8330);">sec</span>
<span class="t" style="left:736.00px;top:36.76px;font-size:5.4px;line-height:6.48px;color:#222;transform:scaleX(0.8330);">sec</span>
<span class="t" style="left:755.40px;top:26.96px;font-size:5.4px;line-height:6.48px;color:#222;transform:scaleX(0.7742);">End:</span>
<span class="t" style="left:755.40px;top:36.76px;font-size:5.4px;line-height:6.48px;color:#222;transform:scaleX(0.7742);">End:</span>
<span class="t" style="left:780.31px;top:27.06px;font-size:5.4px;line-height:6.48px;color:#222;transform:scaleX(0.8300);">0</span>
<span class="t" style="left:780.31px;top:36.76px;font-size:5.4px;line-height:6.48px;color:#222;transform:scaleX(0.8300);">0</span>
<span class="t" style="left:789.00px;top:26.96px;font-size:5.4px;line-height:6.48px;color:#222;transform:scaleX(0.8330);">sec</span>
<span class="t" style="left:789.00px;top:36.76px;font-size:5.4px;line-height:6.48px;color:#222;transform:scaleX(0.8330);">sec</span>
<span class="t" style="left:680.00px;top:48.21px;font-size:5.4px;line-height:6.48px;color:#222;transform:scaleX(0.7691);">Filter: Off</span>
<span class="t" style="left:680.00px;top:58.36px;font-size:5.4px;line-height:6.48px;color:#222;transform:scaleX(0.7691);">Filter: Off</span>
<span class="t" style="left:680.00px;top:69.16px;font-size:5.4px;line-height:6.48px;color:#222;transform:scaleX(0.7972);">Notch: Off</span>
<span class="t" style="left:717.00px;top:48.21px;font-size:5.4px;line-height:6.48px;color:#222;transform:scaleX(0.7991);">20000</span>
<span class="t" style="left:717.00px;top:58.36px;font-size:5.4px;line-height:6.48px;color:#222;transform:scaleX(0.7584);">(no limit)</span>
<span class="t" style="left:762.00px;top:48.21px;font-size:5.4px;line-height:6.48px;color:#222;transform:scaleX(0.8579);width:32.99px;overflow:hidden;">LP @start/end</span>
<span class="t" style="left:762.00px;top:58.36px;font-size:5.4px;line-height:6.48px;color:#222;transform:scaleX(0.8000);">LP @end</span>
<span class="t" style="left:726.91px;top:69.46px;font-size:5.4px;line-height:6.48px;color:#222;transform:scaleX(0.8300);">0</span>
<span class="t" style="left:736.00px;top:69.56px;font-size:5.4px;line-height:6.48px;color:#222;transform:scaleX(0.7879);">Hz</span>
<span class="t" style="left:752.00px;top:69.56px;font-size:5.4px;line-height:6.48px;color:#222;transform:scaleX(0.8771);">Q:</span>
<span class="t" style="left:778.01px;top:69.46px;font-size:5.4px;line-height:6.48px;color:#222;transform:scaleX(0.8300);">10</span>
</div>
<div class="g" id="options" aria-label="options">
<span class="t" style="left:808.59px;top:30.76px;font-size:5.4px;line-height:6.48px;color:#222;transform:scaleX(0.8300);">Show</span>
<span class="t" style="left:873.76px;top:30.52px;font-size:5.8px;line-height:6.96px;color:#222;transform:scaleX(0.9000);">A</span>
<span class="t" style="left:803.50px;top:43.56px;font-size:5.4px;line-height:6.48px;color:#222;transform:scaleX(0.7943);">[WASAPI] Out 1-2 (MOTU M Series) 48000/</span>
<span class="t" style="left:809.60px;top:54.06px;font-size:5.4px;line-height:6.48px;color:#222;transform:scaleX(0.7657);">Log axis</span>
<span class="t" style="left:840.20px;top:54.06px;font-size:5.4px;line-height:6.48px;color:#222;transform:scaleX(0.8781);">dB</span>
<span class="t" style="left:860.30px;top:54.06px;font-size:5.4px;line-height:6.48px;color:#222;transform:scaleX(0.8604);">µs</span>
<span class="t" style="left:879.00px;top:54.06px;font-size:5.4px;line-height:6.48px;color:#222;transform:scaleX(0.8645);">Inv. Φ</span>
<span class="t" style="left:856.00px;top:72.96px;font-size:5.4px;line-height:6.48px;color:#222;transform:scaleX(0.7997);">Reset Axis</span>
</div>
<div class="g" id="tabs" aria-label="tabs">
<span class="t" style="left:4.00px;top:86.96px;font-size:5.4px;line-height:6.48px;color:#222;transform:scaleX(0.7442);">Results</span>
<span class="t" style="left:22.60px;top:86.96px;font-size:5.4px;line-height:6.48px;color:#222;transform:scaleX(0.7524);">Original</span>
<span class="t" style="left:41.60px;top:86.96px;font-size:5.4px;line-height:6.48px;color:#222;transform:scaleX(0.7759);">Original Δ</span>
<span class="t" style="left:65.00px;top:86.96px;font-size:5.4px;line-height:6.48px;color:#222;transform:scaleX(0.7513);">X-Correlated</span>
<span class="t" style="left:93.40px;top:86.96px;font-size:5.4px;line-height:6.48px;color:#222;transform:scaleX(0.8015);">Matched</span>
<span class="t" style="left:115.00px;top:86.96px;font-size:5.4px;line-height:6.48px;color:#222;transform:scaleX(0.7748);">Original Spectra</span>
<span class="t" style="left:150.60px;top:86.96px;font-size:5.4px;line-height:6.48px;color:#222;transform:scaleX(0.8084);">Matched Spectra</span>
<span class="t" style="left:189.00px;top:86.96px;font-size:5.4px;line-height:6.48px;color:#222;transform:scaleX(0.7890);">Spectrum of Δ</span>
<span class="t" style="left:221.00px;top:86.96px;font-size:5.4px;line-height:6.48px;color:#222;transform:scaleX(0.7953);">Δ of Spectra</span>
<span class="t" style="left:249.60px;top:86.96px;font-size:5.4px;line-height:6.48px;color:#222;transform:scaleX(0.8010);">Δ Waveform</span>
<span class="t" style="left:278.60px;top:86.96px;font-size:5.4px;line-height:6.48px;color:#222;transform:scaleX(0.7736);">Spectrogram 1</span>
<span class="t" style="left:311.40px;top:86.96px;font-size:5.4px;line-height:6.48px;color:#222;transform:scaleX(0.7793);">Spectrogram 2</span>
<span class="t" style="left:344.00px;top:85.96px;font-size:5.4px;line-height:6.48px;color:#222;transform:scaleX(0.7838);">Δ Spectrogram</span>
<span class="t" style="left:377.40px;top:86.96px;font-size:5.4px;line-height:6.48px;color:#222;transform:scaleX(0.7348);">Cepstrum</span>
<span class="t" style="left:400.00px;top:86.96px;font-size:5.4px;line-height:6.48px;color:#222;transform:scaleX(0.8032);">Clock Drift</span>
<span class="t" style="left:425.00px;top:86.96px;font-size:5.4px;line-height:6.48px;color:#222;transform:scaleX(0.7699);">Corr Null</span>
<span class="t" style="left:446.00px;top:86.96px;font-size:5.4px;line-height:6.48px;color:#222;transform:scaleX(0.7643);">Linearity</span>
<span class="t" style="left:467.00px;top:86.96px;font-size:5.4px;line-height:6.48px;color:#222;transform:scaleX(0.7829);">FFT Scrubber</span>
</div>
<div class="g" id="plot" aria-label="plot">
<span class="t" style="left:412.00px;top:100.50px;font-size:7.0px;line-height:8.40px;color:#f4f4f4;transform:scaleX(1.0797);font-weight:bold;">Delta Spectrogram</span>
<span class="t" style="left:25.83px;top:491.90px;font-size:6.0px;line-height:7.20px;color:#e0e0e0;transform:scaleX(0.8800);">0</span>
<span class="t" style="left:65.26px;top:491.90px;font-size:6.0px;line-height:7.20px;color:#e0e0e0;transform:scaleX(0.8800);">23</span>
<span class="t" style="left:106.16px;top:491.90px;font-size:6.0px;line-height:7.20px;color:#e0e0e0;transform:scaleX(0.8800);">47</span>
<span class="t" style="left:144.86px;top:491.90px;font-size:6.0px;line-height:7.20px;color:#e0e0e0;transform:scaleX(0.8800);">1:10</span>
<span class="t" style="left:185.76px;top:491.90px;font-size:6.0px;line-height:7.20px;color:#e0e0e0;transform:scaleX(0.8800);">1:34</span>
<span class="t" style="left:226.66px;top:491.90px;font-size:6.0px;line-height:7.20px;color:#e0e0e0;transform:scaleX(0.8800);">1:57</span>
<span class="t" style="left:267.56px;top:491.90px;font-size:6.0px;line-height:7.20px;color:#e0e0e0;transform:scaleX(0.8800);">2:21</span>
<span class="t" style="left:308.46px;top:491.90px;font-size:6.0px;line-height:7.20px;color:#e0e0e0;transform:scaleX(0.8800);">2:44</span>
<span class="t" style="left:349.36px;top:491.90px;font-size:6.0px;line-height:7.20px;color:#e0e0e0;transform:scaleX(0.8800);">3:08</span>
<span class="t" style="left:390.26px;top:491.90px;font-size:6.0px;line-height:7.20px;color:#e0e0e0;transform:scaleX(0.8800);">3:31</span>
<span class="t" style="left:431.16px;top:491.90px;font-size:6.0px;line-height:7.20px;color:#e0e0e0;transform:scaleX(0.8800);">3:55</span>
<span class="t" style="left:472.06px;top:491.90px;font-size:6.0px;line-height:7.20px;color:#e0e0e0;transform:scaleX(0.8800);">4:18</span>
<span class="t" style="left:512.96px;top:491.90px;font-size:6.0px;line-height:7.20px;color:#e0e0e0;transform:scaleX(0.8800);">4:42</span>
<span class="t" style="left:553.86px;top:491.90px;font-size:6.0px;line-height:7.20px;color:#e0e0e0;transform:scaleX(0.8800);">5:05</span>
<span class="t" style="left:594.76px;top:491.90px;font-size:6.0px;line-height:7.20px;color:#e0e0e0;transform:scaleX(0.8800);">5:28</span>
<span class="t" style="left:635.66px;top:491.90px;font-size:6.0px;line-height:7.20px;color:#e0e0e0;transform:scaleX(0.8800);">5:52</span>
<span class="t" style="left:676.56px;top:491.90px;font-size:6.0px;line-height:7.20px;color:#e0e0e0;transform:scaleX(0.8800);">6:15</span>
<span class="t" style="left:717.46px;top:491.90px;font-size:6.0px;line-height:7.20px;color:#e0e0e0;transform:scaleX(0.8800);">6:39</span>
<span class="t" style="left:758.36px;top:491.90px;font-size:6.0px;line-height:7.20px;color:#e0e0e0;transform:scaleX(0.8800);">7:02</span>
<span class="t" style="left:799.26px;top:491.90px;font-size:6.0px;line-height:7.20px;color:#e0e0e0;transform:scaleX(0.8800);">7:26</span>
<span class="t" style="left:840.16px;top:491.90px;font-size:6.0px;line-height:7.20px;color:#e0e0e0;transform:scaleX(0.8800);">7:49</span>
<span class="t" style="left:6.75px;top:140.50px;font-size:6.0px;line-height:7.20px;color:#e0e0e0;transform:scaleX(0.8800);">20.18k</span>
<span class="t" style="left:6.75px;top:197.85px;font-size:6.0px;line-height:7.20px;color:#e0e0e0;transform:scaleX(0.8800);">16.82k</span>
<span class="t" style="left:6.75px;top:255.20px;font-size:6.0px;line-height:7.20px;color:#e0e0e0;transform:scaleX(0.8800);">13.45k</span>
<span class="t" style="left:6.75px;top:312.55px;font-size:6.0px;line-height:7.20px;color:#e0e0e0;transform:scaleX(0.8800);">10.09k</span>
<span class="t" style="left:9.68px;top:369.90px;font-size:6.0px;line-height:7.20px;color:#e0e0e0;transform:scaleX(0.8800);">6.72k</span>
<span class="t" style="left:9.68px;top:427.25px;font-size:6.0px;line-height:7.20px;color:#e0e0e0;transform:scaleX(0.8800);">3.36k</span>
</div>
<div class="g" id="colorbar" aria-label="colorbar">
<span class="t" style="left:874.30px;top:99.00px;font-size:5.0px;line-height:6.00px;color:#444;transform:scaleX(0.8317);">dBFS</span>
<span class="t" style="left:889.50px;top:496.09px;font-size:4.1px;line-height:4.92px;color:#3a3a3a;transform:scaleX(1.0000);">-5</span>
<span class="t" style="left:889.50px;top:448.33px;font-size:4.1px;line-height:4.92px;color:#3a3a3a;transform:scaleX(1.0000);">-4</span>
<span class="t" style="left:889.50px;top:400.57px;font-size:4.1px;line-height:4.92px;color:#3a3a3a;transform:scaleX(1.0000);">-3</span>
<span class="t" style="left:889.50px;top:352.81px;font-size:4.1px;line-height:4.92px;color:#3a3a3a;transform:scaleX(1.0000);">-1</span>
<span class="t" style="left:889.50px;top:305.05px;font-size:4.1px;line-height:4.92px;color:#3a3a3a;transform:scaleX(1.0000);">0</span>
<span class="t" style="left:889.50px;top:257.29px;font-size:4.1px;line-height:4.92px;color:#3a3a3a;transform:scaleX(1.0000);">1</span>
<span class="t" style="left:889.50px;top:209.53px;font-size:4.1px;line-height:4.92px;color:#3a3a3a;transform:scaleX(1.0000);">2</span>
<span class="t" style="left:889.50px;top:161.77px;font-size:4.1px;line-height:4.92px;color:#3a3a3a;transform:scaleX(1.0000);">4</span>
<span class="t" style="left:889.50px;top:114.01px;font-size:4.1px;line-height:4.92px;color:#3a3a3a;transform:scaleX(1.0000);">5</span>
</div>
<div class="g" id="statusbar" aria-label="statusbar">
<span class="t" style="left:16.60px;top:505.88px;font-size:5.2px;line-height:6.24px;color:#242c62;transform:scaleX(0.8250);">BIT PERFECT!</span>
<span class="t" style="left:53.03px;top:505.98px;font-size:5.2px;line-height:6.24px;color:#222;transform:scaleX(0.8400);">100%</span>
<span class="t" style="left:71.40px;top:505.88px;font-size:5.2px;line-height:6.24px;color:#222;transform:scaleX(0.8046);">Gain:</span>
<span class="t" style="left:84.70px;top:505.98px;font-size:5.2px;line-height:6.24px;color:#222;transform:scaleX(0.8400);">----</span>
<span class="t" style="left:103.60px;top:505.88px;font-size:5.2px;line-height:6.24px;color:#222;transform:scaleX(0.8143);">Phase Offset</span>
<span class="t" style="left:138.16px;top:505.98px;font-size:5.2px;line-height:6.24px;color:#222;transform:scaleX(0.8400);">0ns</span>
<span class="t" style="left:153.00px;top:505.88px;font-size:5.2px;line-height:6.24px;color:#222;transform:scaleX(0.7923);">Difference (rms):</span>
<span class="t" style="left:192.71px;top:505.98px;font-size:5.2px;line-height:6.24px;color:#222;transform:scaleX(0.8400);">-400dB</span>
<span class="t" style="left:214.20px;top:505.98px;font-size:5.2px;line-height:6.24px;color:#222;transform:scaleX(0.8400);">-400dBA</span>
<span class="t" style="left:238.00px;top:505.88px;font-size:5.2px;line-height:6.24px;color:#222;transform:scaleX(0.7861);">Correlated Null:</span>
<span class="t" style="left:276.17px;top:505.98px;font-size:5.2px;line-height:6.24px;color:#222;transform:scaleX(0.8400);">300dB</span>
<span class="t" style="left:297.26px;top:505.98px;font-size:5.2px;line-height:6.24px;color:#222;transform:scaleX(0.8400);">300dBA</span>
<span class="t" style="left:319.00px;top:505.88px;font-size:5.2px;line-height:6.24px;color:#222;transform:scaleX(0.8103);">Clock Drift:</span>
<span class="t" style="left:348.27px;top:505.98px;font-size:5.2px;line-height:6.24px;color:#222;transform:scaleX(0.8400);">0ppm</span>
<span class="t" style="left:366.60px;top:505.88px;font-size:5.2px;line-height:6.24px;color:#222;transform:scaleX(0.7807);">Fit Quality:</span>
<span class="t" style="left:389.30px;top:505.98px;font-size:5.2px;line-height:6.24px;color:#222;transform:scaleX(0.8400);">----</span>
<span class="t" style="left:408.00px;top:505.88px;font-size:5.2px;line-height:6.24px;color:#222;transform:scaleX(0.7866);">Jitter:</span>
<span class="t" style="left:426.97px;top:505.98px;font-size:5.2px;line-height:6.24px;color:#222;transform:scaleX(0.8400);">0sec</span>
</div>
<div class="g" id="frame" aria-label="frame">
</div>
</div>
</body></html>
